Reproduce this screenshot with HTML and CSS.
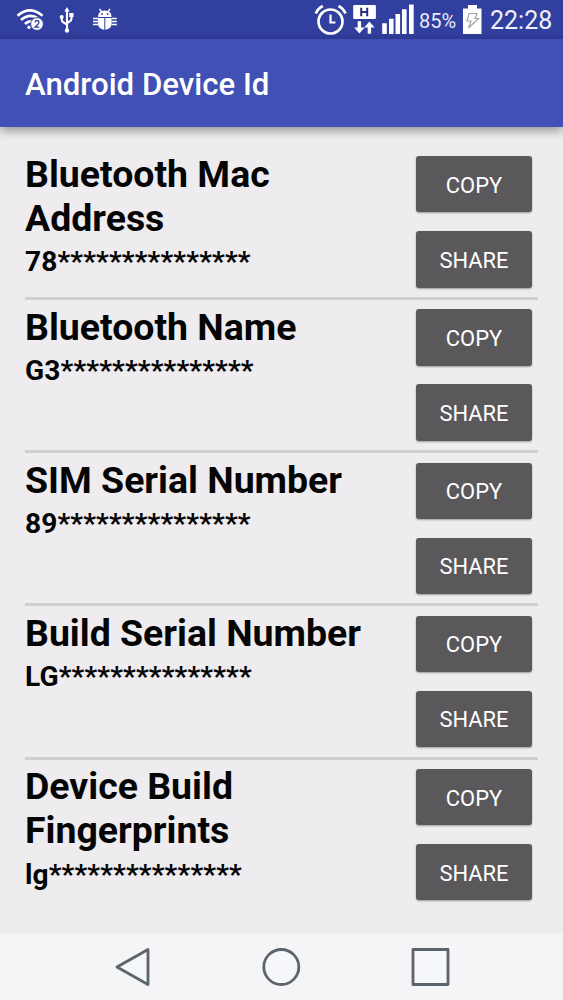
FILE: index.html
```html
<!DOCTYPE html>
<html lang="en">
<head>
<meta charset="utf-8">
<title>Android Device Id</title>
<link rel="stylesheet" href="styles.css">
</head>
<body>
<div class="screen">
  <div class="status">
    <svg class="status-left" width="125" height="39" viewBox="0 0 125 39" fill="none" stroke="#fff">
      <g stroke-width="2.800">
        <path d="M17.500 15.800Q29.800 5 42.500 15.800"/>
        <path d="M21 20Q29.500 12.500 38 18.500"/>
        <path d="M25 24Q28 21 32 21.500"/>
      </g>
      <circle cx="29" cy="27.200" r="1.700" fill="#fff" stroke="none"/>
      <circle cx="37" cy="24" r="6.400" fill="#fff" stroke="#313f9f" stroke-width="1"/>
      <path d="M35 22.300q.3-1.800 2-1.800c2.600 0 2.400 2.300 1 3.700l-3 3h4.300" stroke="#3340a0" stroke-width="1.300"/>
      <path d="M67 10v20M61.700 17v2.500q0 2 2 3l3.300 2M71.500 16v2.500q0 2-2 3l-2.500 2" stroke-width="2.100"/>
      <g fill="#fff" stroke="none">
        <path d="M67 7l2.600 4.500h-5.200z"/>
        <circle cx="61.700" cy="17" r="2"/>
        <path d="M69.200 13h4.300v4h-4.300z"/>
        <circle cx="67" cy="30.500" r="2.200"/>
        <path d="M98 17q0-6.500 6.800-6.500t6.800 6.500z"/>
        <path d="M98 18h6.300v11.800q-6.300-.8-6.300-6zM105.300 18h6.300v5.800q0 5.200-6.300 6z"/>
      </g>
      <path d="M99.500 9l2.300 3M110 9l-2.300 3" stroke-width="1.400"/>
      <path d="M93 18.500H98M93 21.500H98M93 24.500H98M111.600 18.500h5.200M111.600 21.500h5.200M111.600 24.500h5.200" stroke-width="1.700"/>
      <circle cx="102" cy="14" r=".9" fill="#3340a0" stroke="none"/>
      <circle cx="107.600" cy="14" r=".9" fill="#3340a0" stroke="none"/>
    </svg>
    <svg class="status-right" width="104" height="39" viewBox="312 0 104 39" fill="none" stroke="#fff">
      <circle cx="330.500" cy="21.500" r="12" stroke-width="2.700"/>
      <path d="M330.500 14.500v8h5" stroke-width="2.200"/>
      <path d="M315.800 13.500q2-5 7-7.500M345.500 13.500q-2-5-7-7.500" stroke-width="2.800"/>
      <rect x="353.200" y="5" width="22.700" height="14" rx="1" fill="#fff" stroke="none"/>
      <path d="M361.200 7.700v8.600M367.200 7.700v8.600M361.200 12h6" stroke="#26307c" stroke-width="2"/>
      <g fill="#fff" stroke="none">
        <path d="M357.700 21.200h3.400v6.300h3.500l-5.200 6-5.200-6h3.500z"/>
        <path d="M367.700 33.800h3.400v-6.300h3.500l-5.200-6-5.200 6h3.500z"/>
        <path d="M382.200 23.300h4.600V34h-4.600zM389 18.700h4.600V34H389zM395.500 14h4.600v20h-4.600zM402 9.300h4.600V34H402zM409 4.500h4.700V34H409z"/>
      </g>
    </svg>
    <span class="percent">85%</span>
    <svg class="battery" width="19" height="30" viewBox="463 5 19 30">
      <path d="M468 5h9v3.500h4.500V34H463V8.500h5z" fill="#fff"/>
      <path d="M469 13.500h8l-2 5h3.500l-10 9.500 2.500-7h-4z" fill="none" stroke="#a5a5aa" stroke-width="1.200"/>
    </svg>
    <span class="clock">22:28</span>
  </div>
  <header class="appbar">Android Device Id</header>
  <main class="list">
    <section class="row">
      <div class="info"><h2>Bluetooth Mac Address</h2><p>78***************</p></div>
      <div class="actions"><button>COPY</button><button>SHARE</button></div>
    </section>
    <section class="row">
      <div class="info"><h2>Bluetooth Name</h2><p>G3***************</p></div>
      <div class="actions"><button>COPY</button><button>SHARE</button></div>
    </section>
    <section class="row">
      <div class="info"><h2>SIM Serial Number</h2><p>89***************</p></div>
      <div class="actions"><button>COPY</button><button>SHARE</button></div>
    </section>
    <section class="row">
      <div class="info"><h2>Build Serial Number</h2><p>LG***************</p></div>
      <div class="actions"><button>COPY</button><button>SHARE</button></div>
    </section>
    <section class="row">
      <div class="info"><h2>Device Build Fingerprints</h2><p>lg***************</p></div>
      <div class="actions"><button>COPY</button><button>SHARE</button></div>
    </section>
  </main>
  <nav class="navbar">
    <svg width="40" height="44" viewBox="0 0 40 44"><path d="M5 22L36 4.500v35z"/></svg>
    <svg width="40" height="44" viewBox="0 0 40 44"><circle cx="19.300" cy="22" r="17.500"/></svg>
    <svg width="40" height="44" viewBox="0 0 40 44"><path d="M2 4.500h35v35H2z"/></svg>
  </nav>
</div>
</body>
</html>
```
FILE: styles.css
```css
* { box-sizing: border-box; }
body { margin: 0; font-family: Roboto, sans-serif; }
.screen {
  width: 563px;
  height: 1000px;
  display: flex;
  flex-direction: column;
  overflow: hidden;
  background: #eeecef;
}
.status {
  height: 39px;
  flex: none;
  display: flex;
  align-items: flex-start;
  background: #313f9f;
  color: #fff;
  white-space: nowrap;
}
.status svg { flex: none; }
.status-right { margin-left: 187px; }
.percent {
  width: 47px;
  padding-left: 3px;
  font-size: 20px;
  line-height: 42px;
  color: #e8eaf6;
}
.battery { margin-top: 5px; }
.clock {
  padding-left: 8px;
  font-size: 25px;
  line-height: 42px;
  color: #eef0fb;
}
.appbar {
  height: 87.500px;
  flex: none;
  padding-left: 25px;
  background: #4050b5;
  color: #fff;
  font-size: 31.200px;
  font-weight: 500;
  line-height: 92px;
  box-shadow: 0 3px 10px rgba(0, 0, 0, .42);
}
.list {
  flex: 1;
  padding: 20.300px 25px 0;
}
.row {
  height: 153.200px;
  padding-top: 9.400px;
  display: flex;
  justify-content: space-between;
  border-bottom: 3px solid #d0ced1;
}
.row:last-child { border-bottom: 0; }
.info { width: 370px; margin-top: -3.500px; }
h2, p { margin: 0; font-weight: 700; color: #050506; }
h2 {
  max-width: 345px;
  font-size: 37.450px;
  line-height: 43.900px;
}
.row:first-child h2, .row:last-child h2 { max-width: 290px; }
p {
  margin-top: 4.300px;
  font-size: 28.100px;
  line-height: 33px;
  letter-spacing: .120px;
}
.actions {
  width: 116px;
  margin-right: 6px;
  display: flex;
  flex-direction: column;
  gap: 18.800px;
}
button {
  height: 56.300px;
  padding: 2px 0 0;
  border: 0;
  border-radius: 3px;
  background: #5a585b;
  color: #fff;
  font: 400 21.900px Roboto, sans-serif;
  box-shadow: 0 1px 2px rgba(0, 0, 0, .35);
}
.navbar {
  height: 66px;
  flex: none;
  padding: 0 112px;
  display: flex;
  align-items: center;
  justify-content: space-between;
  background: #f5f4f7;
}
.navbar svg {
  fill: #f5f7fa;
  stroke: #5c646c;
  stroke-width: 2.800;
  stroke-linejoin: round;
}
```
